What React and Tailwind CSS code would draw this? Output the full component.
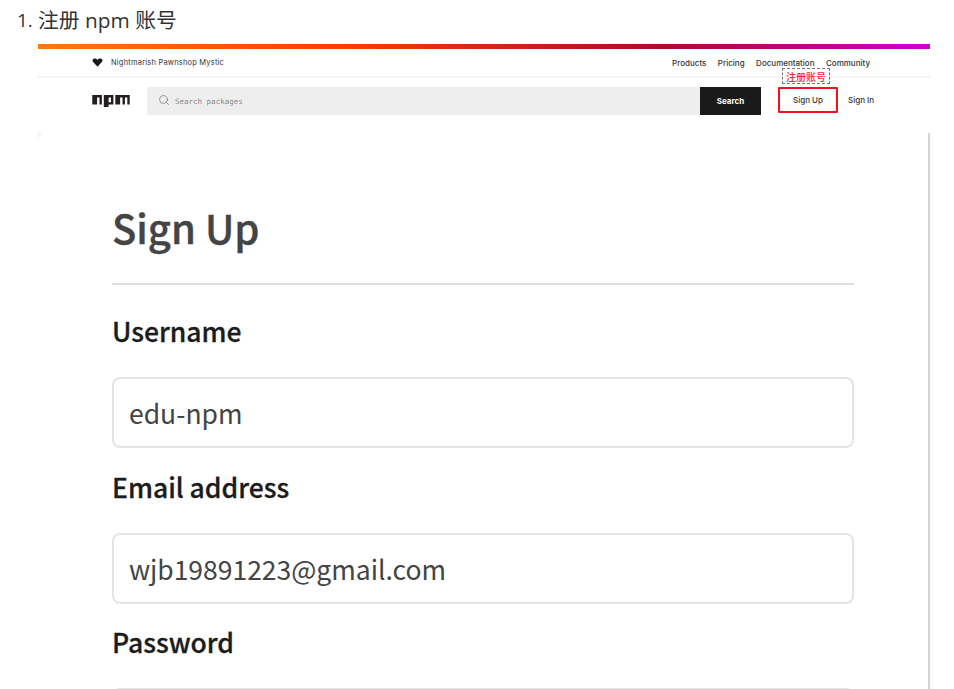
import { Search } from 'lucide-react'

const fields = [
  { label: 'Username', value: 'edu-npm', labelGap: 'mt-[26px]' },
  { label: 'Email address', value: 'wjb19891223@gmail.com', labelGap: 'mt-[19px]' },
  { label: 'Password', value: '', labelGap: 'mt-[18px]' },
]

function NpmLogo() {
  return (
    <svg viewBox="0 0 780 250" className="w-[38px] h-[12px] shrink-0" fill="#231f20">
      <path d="M240,250h100v-50h100V0H240V250z M340,50h50v100h-50V50z M480,0v200h100V50h50v150h50V50h50v150h50V0H480z M0,200h100V50h50v150h50V50h0V0H0V200z" />
    </svg>
  )
}

function Heart() {
  return (
    <svg viewBox="0 0 24 24" className="w-[11px] h-[11px] shrink-0 -mt-[2px]" fill="#1a1a1a">
      <path d="M12 21 2 10.500C0 7.500 1.500 3.500 6 3.500c2.500 0 4.500 1 6 3 1.500-2 3.500-3 6-3 4.500 0 6 4 4 7z" />
    </svg>
  )
}

function App() {
  return (
    <div className="h-[689px] overflow-hidden bg-white pl-[38px] pr-[24px] font-['Open_Sans','Noto_Sans_CJK_SC',sans-serif]">
      {/* List heading */}
      <div className="relative h-[44px] pt-[6px] text-[20.800px] leading-[28px] text-[#333]">
        <span className="absolute -left-[21px] text-[19px]">1.</span>
        注册 npm 账号
      </div>

      {/* Screenshot of npm */}
      <div className="h-[5px] [background-image:linear-gradient(to_right,#fb7a10,#ff3d00_33%,#a50e2d_70%,#cc00d4)]"></div>

      <div className="relative font-['Inter',sans-serif]">
        <div className="h-[29px] border-b-2 border-[#f4f4f4] pl-[54px] pr-[60px] pt-[1px] flex items-center justify-between text-[#333]">
          <div className="flex items-center gap-[8px] text-[7.5px]">
            <Heart />
            <span className="tracking-[0.2px]">Nightmarish Pawnshop Mystic</span>
          </div>
          <div className="flex items-center gap-[11.500px] text-[8px] font-medium">
            <span>Products</span>
            <span>Pricing</span>
            <span>Documentation</span>
            <span>Community</span>
          </div>
        </div>

        <div className="h-[55px] pl-[54px] flex items-start pt-[9px]">
          <div className="h-[28px] flex items-center">
            <NpmLogo />
          </div>
          <div className="ml-[17px] w-[553px] h-[28px] bg-[#eeeeee] flex items-center pl-[11px] text-[#8a8a8a]">
            <Search size={12} strokeWidth={1.25} className="text-[#666] -mt-[2px]" />
            <span className="ml-[5px] mt-[1px] font-['DejaVu_Sans_Mono',monospace] text-[7.5px]">Search packages</span>
          </div>
          <div className="w-[61px] h-[28px] bg-[#1b1a1a] text-white text-[8px] font-bold flex items-center justify-center">Search</div>
          <div className="ml-[17px] w-[60px] h-[26px] border-2 border-[#f0141a] rounded-[1px] text-[8px] text-[#333] font-medium flex items-center justify-center">Sign Up</div>
          <div className="ml-[10px] h-[26px] flex items-center text-[8px] text-[#333] font-medium">Sign In</div>
        </div>

        {/* Red annotation over the nav */}
        <div className="absolute left-[744px] top-[19px] w-[48px] h-[16px] bg-white border border-dashed border-[#777] flex items-center justify-center text-[10px] font-medium text-[#f5222d] font-['Noto_Sans_CJK_SC',sans-serif]">
          注册账号
        </div>
      </div>

      {/* Sign up card */}
      <div className="relative h-[600px] border-r-2 border-[#d4d4d4] pl-[74px] pr-[74px] pt-[64px] font-['Noto_Sans_CJK_SC',sans-serif]">
        <div className="absolute left-0 top-0 w-[5px] h-[6px] bg-gradient-to-br from-[#e6e6e6] to-white to-60%"></div>
        <h1 className="text-[40px] leading-[60px] font-medium [-webkit-text-stroke:0.4px] text-[#444] pb-[26px] border-b-2 border-[#e0e0e0]">Sign Up</h1>
        {fields.map(field => (
          <div key={field.label}>
            <div className={`text-[26.500px] leading-[40px] font-medium [-webkit-text-stroke:0.3px] text-[#1c1c1c] ${field.labelGap}`}>{field.label}</div>
            <div className="mt-[26px] h-[71px] rounded-[8px] border-2 border-[#e4e4e4] flex items-center pl-[15px] text-[26.500px] text-[#444]">
              {field.value}
            </div>
          </div>
        ))}
      </div>
    </div>
  )
}

export default App
